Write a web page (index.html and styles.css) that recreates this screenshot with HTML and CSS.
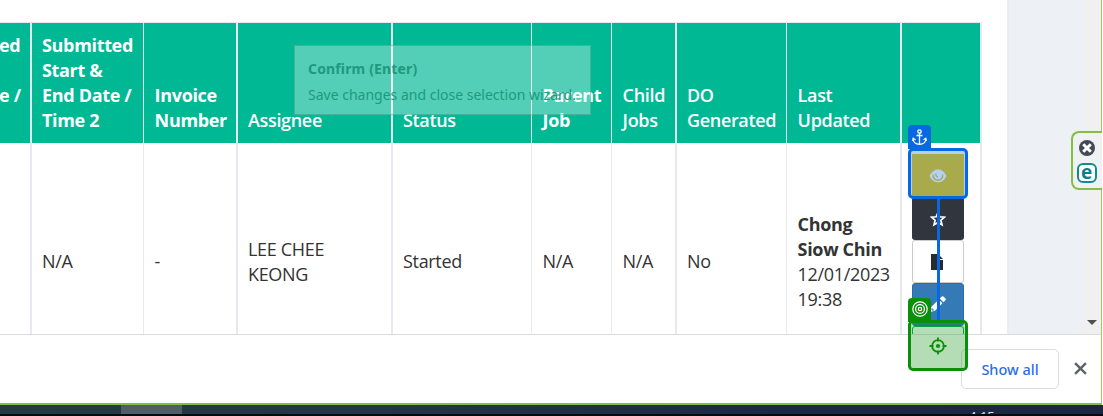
FILE: index.html
```html
<!DOCTYPE html>
<html lang="en">
<head>
<meta charset="utf-8">
<title>Jobs</title>
<link rel="stylesheet" href="styles.css">
</head>
<body>
<div class="screen">
  <div class="window">
    <main class="page">
      <section class="panel">
        <div class="table">
          <div class="row head">
            <div class="cell wide clipped"><span>ed<br>&nbsp;<br>e /<br>&nbsp;</span></div>
            <div class="cell"><span>Submitted<br>Start &amp;<br>End Date /<br>Time 2</span></div>
            <div class="cell wide late"><span>Invoice<br>Number</span></div>
            <div class="cell wide semi"><span>Assignee</span></div>
            <div class="cell semi"><span>Status</span></div>
            <div class="cell late"><span>Parent<br>Job</span></div>
            <div class="cell wide late semi"><span>Child<br>Jobs</span></div>
            <div class="cell semi"><span>DO<br>Generated</span></div>
            <div class="cell wide late semi"><span>Last<br>Updated</span></div>
            <div class="cell wide"></div>
          </div>
          <div class="row body">
            <div class="cell wide"></div>
            <div class="cell"><span>N/A</span></div>
            <div class="cell wide late"><span>-</span></div>
            <div class="cell wide"><span>LEE CHEE<br>KEONG</span></div>
            <div class="cell"><span>Started</span></div>
            <div class="cell late"><span>N/A</span></div>
            <div class="cell wide late"><span>N/A</span></div>
            <div class="cell"><span>No</span></div>
            <div class="cell wide late"><span><b>Chong<br>Siow Chin</b><br>12/01/2023<br>19:38</span></div>
            <div class="cell wide actions">
              <div class="btn view"></div>
              <div class="btn star"><svg width="16" height="16" viewBox="0 0 16 16"><path d="M8 1.500l1.800 4.300 4.700.4-3.600 3 1.100 4.600L8 11.400l-4 2.400 1.100-4.600-3.600-3 4.700-.4z" fill="none" stroke="#fff" stroke-width="1.700"/></svg></div>
              <div class="btn doc"><svg width="12" height="16" viewBox="0 0 12 16"><path d="M0 0h7v6h5v10H0z" fill="#292b31"/><path d="M8 1l4 4H8z" fill="#292b31"/></svg></div>
              <div class="btn edit"><svg width="16" height="16" viewBox="0 0 16 16"><path d="M0 16l1.200-5L8.700 3.600l3.700 3.700L5 14.700zM9.700 2.600L11.800.5q.8-.7 1.600 0l2.100 2.100q.7.8 0 1.600l-2.100 2.100z" fill="#fff"/><path d="M2 12v2h2" fill="none" stroke="#337ab7" stroke-width="1"/></svg></div>
              <div class="btn next"></div>
            </div>
          </div>
        </div>
      </section>
      <div class="gutter"></div>
      <div class="scrollbar"><i class="arrow"></i></div>
    </main>
    <footer class="downloads">
      <div class="show">Show all</div>
      <svg class="close" width="13" height="13" viewBox="0 0 12 12"><path d="M1 1l10 10M11 1L1 11" stroke="#5f6368" stroke-width="2.200"/></svg>
    </footer>
  </div>
  <div class="taskbar"><div class="task"></div><div class="clock">4:15</div></div>

  <div class="tip"><b>Confirm (Enter)</b><span>Save changes and close selection wizard.</span></div>

  <div class="link"></div>
  <div class="marker anchor"><svg width="18" height="16" viewBox="0 0 18 16"><path d="M.5 8C3 3.200 6 1.500 9 1.500S15 3.200 17.500 8c-2.300 4.600-5 6.300-8.500 6.300S2.800 12.600.5 8z" fill="#b5d0f5"/><path d="M4.200 6.500a4.800 4.800 0 1 0 9.400 0" fill="none" stroke="#a8aa4c" stroke-width="1.300"/><path d="M7.200 5.500a2.200 2.200 0 0 0 1.900 3.400" fill="none" stroke="#a8aa4c" stroke-width="1.300"/></svg></div>
  <div class="tag anchor-tag"><svg width="15" height="17" viewBox="0 0 15 17"><g fill="none" stroke="#fff" stroke-width="1.300"><circle cx="7.500" cy="2.500" r="1.700"/><path d="M7.500 4.200v11.200M4.500 6.500h6M1 9.500c.3 4 3 5.800 6.500 5.800s6.200-1.800 6.500-5.800M.6 12l.6-2.700 2.300 1.400M14.400 12l-.6-2.700-2.300 1.400"/></g></svg></div>
  <div class="marker target"><svg width="18" height="18" viewBox="0 0 18 18"><g fill="none" stroke="#0a8f0a" stroke-width="1.800"><circle cx="9" cy="9" r="5.900"/><path d="M9 .5v4M9 13.500v4M.5 9h4M13.500 9h4"/></g><circle cx="9" cy="9" r="2.100" fill="#0a8f0a"/></svg></div>
  <div class="tag target-tag"><svg width="16" height="16" viewBox="0 0 16 16"><g fill="none" stroke="#fff" stroke-width="1.200"><circle cx="8" cy="8" r="7.200"/><circle cx="8" cy="8" r="4.400"/><circle cx="8" cy="8" r="1.700"/></g></svg></div>

  <div class="widget">
    <svg width="16" height="16" viewBox="0 0 16 16"><circle cx="8" cy="8" r="8" fill="#444957"/><path d="M4.200 4.200l7.600 7.600M11.800 4.200l-7.600 7.600" stroke="#fff" stroke-width="3"/></svg>
    <div class="logo">e</div>
  </div>
</div>
</body>
</html>
```
FILE: styles.css
```css
* { box-sizing: border-box; }
body { margin: 0; background: #fff; }
.screen { position: relative; width: 1103px; height: 416px; overflow: hidden; font-family: "Open Sans", sans-serif; }
.window { width: 1102px; height: 405px; border-right: 1px solid #9ccb5e; border-bottom: 2px solid #84bf41; display: flex; flex-direction: column; }
.page { height: 335px; flex: none; display: flex; overflow: hidden; border-bottom: 1px solid #d9dbdc; }
.panel { width: 1007px; padding-top: 22px; background: #fff; flex: none; }
.gutter { flex: 1; background: #edf1f6; border-left: 2px solid #e8edf1; }
.scrollbar { width: 19px; background: #f0f0f0; display: flex; align-items: flex-end; justify-content: center; padding: 0 0 9px 1px; }
.arrow { border: 5px solid transparent; border-top-color: #505050; border-bottom: 0; }

.table { width: 982px; border-top: 1px solid #e6eaee; }
.row { display: grid; grid-template-columns: 32px 112px 94px 155px 139px 80px 65px 110px 115px 80px; }
.cell { display: flex; border-right: 1px solid #e6eaee; padding: 0 0 0 10px; font-size: 18px; line-height: 25px; letter-spacing: -.33px; white-space: nowrap; }
.wide { border-right-width: 2px; }
.late { padding-left: 10.6px; }
.head { height: 120px; background: #00b894; color: #fff; font-weight: 700; }
.head .cell { align-items: flex-end; padding-bottom: 10px; }
.head .semi { font-weight: 600; }
.head .clipped { padding-left: 0; }
.head .clipped span { margin-left: -1px; }
.body { height: 237px; color: #333; }
.body .cell { align-items: center; }
.body .actions { flex-direction: column; align-items: flex-start; padding-top: 11px; }
.btn { width: 52px; height: 43px; flex: none; border-radius: 3px; display: flex; align-items: center; justify-content: center; }
.view { background: #a8aa4c; }
.star { background: #31353d; }
.doc { background: #fff; border: 1px solid #ccc; padding-right: 2px; }
.edit { background: #337ab7; border: 1px solid #2e6da4; padding-bottom: 2px; }
.next { border: 1px solid #00b060; }

.downloads { flex: 1; display: flex; align-items: center; justify-content: flex-end; gap: 15px; padding: 0 14px 1px 0; }
.show { width: 98px; height: 40px; border: 1px solid #dadce0; border-radius: 5px; color: #2b6de8; font: 500 14.5px/38px "Noto Sans", sans-serif; text-align: center; }
.taskbar { height: 11px; display: flex; overflow: hidden; background: linear-gradient(90deg, #223b43, #223646 35%, #1b2a43 70%, #1b2740); border-bottom: 2px solid #08090c; }
.task { width: 61px; margin-left: 121px; background: #4d5e66; }
.clock { margin-left: 787px; padding-top: 2px; color: #dde2e8; font: 13px/18px "Noto Sans", sans-serif; }

.tip { position: absolute; left: 294px; top: 45px; width: 297px; height: 70px; padding: 13px; border: 1px solid rgba(40, 150, 125, .45); background: rgba(255, 255, 255, .32); color: #20997f; display: flex; flex-direction: column; gap: 6px; white-space: nowrap; font: 14px/20px "Noto Sans", sans-serif; }
.tip b { letter-spacing: .15px; }
.link { position: absolute; left: 937px; top: 198px; width: 3px; height: 123px; background: #0868df; }
.marker { position: absolute; left: 908px; width: 60px; display: flex; align-items: center; justify-content: center; border: 3px solid; border-radius: 5px; padding-right: 1px; }
.anchor { top: 148px; height: 51px; padding-top: 5px; border-color: #0868df; background: linear-gradient(#a8aa4c, #a8aa4c) 1px 3px / 52px 42px no-repeat #b5d0f5; }
.target { top: 320px; height: 51px; border-color: #0a8f0a; background: rgba(10, 143, 10, .3); background-clip: padding-box; }
.tag { position: absolute; left: 908px; width: 23px; height: 24px; display: flex; align-items: center; justify-content: center; border-radius: 4px 4px 0 0; }
.anchor-tag { top: 125px; background: #0868df; }
.target-tag { top: 298px; padding-bottom: 2px; background: #0a8f0a; }

.widget { position: absolute; left: 1071px; top: 131px; width: 31px; height: 59px; display: flex; flex-direction: column; align-items: center; gap: 7px; padding: 7px 2px 0 0; border: 2px solid #84bf41; border-right: 0; border-radius: 8px 0 0 8px; background: #f0f1f3; }
.logo { width: 20px; height: 20px; border: 2px solid #108b8f; border-radius: 6px; background: #fff; color: #087f86; font: bold 19px/14px "Open Sans", sans-serif; text-align: center; }
```
